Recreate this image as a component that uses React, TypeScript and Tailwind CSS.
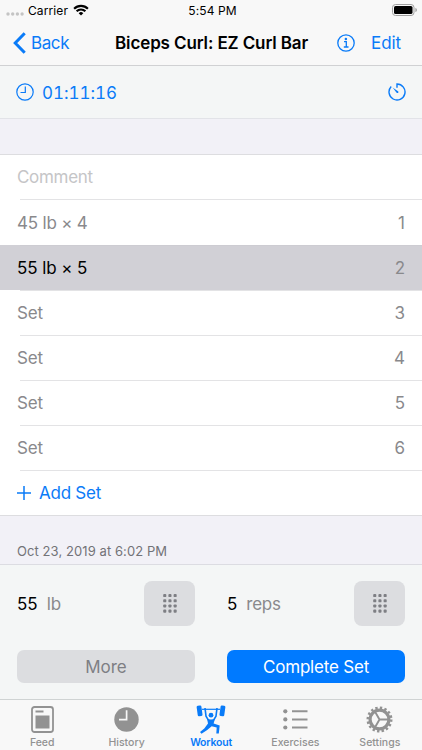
import type { ReactNode } from 'react'

const SETS = [
  { label: '45 lb × 4', active: false },
  { label: '55 lb × 5', active: true },
  { label: 'Set', active: false },
  { label: 'Set', active: false },
  { label: 'Set', active: false },
  { label: 'Set', active: false },
]

function StatusBar() {
  return (
    <div className="flex h-5 items-center text-[12px] leading-5 text-black">
      <div className="flex flex-1 items-center pl-[6px]">
        <svg width="18" height="4" viewBox="0 0 18 4" className="mt-[8px]" fill="#c4c4c4">
          <circle cx="2" cy="2" r="1.7" />
          <circle cx="6.7" cy="2" r="1.7" />
          <circle cx="11.4" cy="2" r="1.7" />
          <circle cx="16.1" cy="2" r="1.7" />
        </svg>
        <span className="ml-1 pt-px tracking-[0.1px]">Carrier</span>
        <svg width="16" height="12" viewBox="0 0 16 12" className="ml-[5px]" fill="none" stroke="#000" strokeWidth="2.1">
          <path d="M1.1 4.7a9.8 9.8 0 0 1 13.8 0" />
          <path d="M3.6 7.3a6.2 6.2 0 0 1 8.8 0" />
          <path d="M8 11.6 5.7 9.2a3.2 3.2 0 0 1 4.6 0z" fill="#000" stroke="none" />
        </svg>
      </div>
      <span className="pl-px pt-px tracking-[0.1px]">5:54 PM</span>
      <div className="flex flex-1 justify-end pr-[4px]">
        <svg width="26" height="12" viewBox="0 0 26 12">
          <rect x="0.5" y="0.5" width="21.5" height="11" rx="3" fill="none" stroke="#a0a0a0" />
          <rect x="2" y="2" width="18.5" height="8" rx="1.6" />
          <path d="M23.4 4v4c1-.4 1.5-1.1 1.5-2s-.5-1.6-1.5-2z" fill="#a0a0a0" />
        </svg>
      </div>
    </div>
  )
}

function NavBar() {
  return (
    <div className="flex h-[46px] items-center border-b border-[#d0d1d3] pl-[13px] pr-[21px] text-[17px] text-[#0a7bf8]">
      <svg width="13" height="22" viewBox="0 0 13 22" fill="none" stroke="currentColor" strokeWidth="3">
        <path d="M11.7 1.2 2.2 11l9.5 9.8" />
      </svg>
      <span className="ml-[5px] w-[84px] pt-[3px] tracking-[-0.4px]">Back</span>
      <span className="w-[222px] whitespace-nowrap pt-[3px] font-semibold tracking-[-0.12px] text-black">Biceps Curl: EZ Curl Bar</span>
      <svg width="18" height="18" viewBox="0 0 18 18" fill="none" stroke="currentColor" strokeWidth="1.3">
        <circle cx="9" cy="9" r="8.2" />
        <circle cx="8.9" cy="5" r="1.25" fill="currentColor" stroke="none" />
        <path d="M7 7.6h2.3v5.2M6.8 13h4.7" />
      </svg>
      <span className="ml-auto pt-[3px] tracking-[-0.1px]">Edit</span>
    </div>
  )
}

function TimerBar() {
  return (
    <div className="flex h-[53px] items-center border-b border-[#e2e3e8] bg-[#f4f6f6] pl-4 pr-4 text-[#0a7bf8]">
      <svg width="18" height="18" viewBox="0 0 18 18" fill="none" stroke="currentColor" strokeWidth="1.2">
        <circle cx="9" cy="9" r="8.2" />
        <path d="M9.3 3.5v6H4.5" />
      </svg>
      <span className="ml-2 pt-[3px] text-[17px] tabular-nums tracking-[-0.05px]">01:11:16</span>
      <svg width="18" height="18" viewBox="0 0 18 18" className="ml-auto" fill="none" stroke="currentColor" strokeWidth="1.4">
        <path d="M9 4.8V1a8 8 0 1 1-5.8 2.5" />
        <path d="M4.6 4.5 10 8.2c1.2 1-.3 2.6-1.4 1.5z" fill="currentColor" stroke="none" />
      </svg>
    </div>
  )
}

function KeypadButton() {
  return (
    <div className="flex h-[45px] w-[51px] items-center justify-center rounded-[8px] bg-[#dcdde0]">
      <svg width="14" height="19" viewBox="0 0 14 19" fill="#7e7f84">
        {[0, 1, 2, 3].map((row) =>
          [0, 1, 2].map((col) => (
            <rect key={`${row}-${col}`} x={col * 5.2 + 0.2} y={row * 5.2} width="3.1" height="3.1" rx="0.9" />
          ))
        )}
      </svg>
    </div>
  )
}

function Tab({ label, active, children }: { label: string; active?: boolean; children: ReactNode }) {
  return (
    <div className={`flex flex-1 flex-col items-center ${active ? 'text-[#0a7bf8]' : 'text-[#929292]'}`}>
      <div className="flex h-[36px] items-center justify-center pt-[3px]">{children}</div>
      <span className={`text-[10.5px] leading-[13px] ${active ? 'font-semibold tracking-[-0.2px]' : 'font-medium'}`}>
        {label}
      </span>
    </div>
  )
}

function TabBar() {
  return (
    <div className="flex h-[51px] border-t border-[#cfd3d3] bg-[#f8f8f8]">
      <Tab label="Feed">
        <svg width="23" height="27" viewBox="0 0 23 27" fill="none" stroke="currentColor">
          <rect x="1" y="1" width="21" height="25" rx="2.5" strokeWidth="1.8" />
          <path d="M4.5 5.5h8" strokeWidth="2" />
          <rect x="4.5" y="9.5" width="14" height="13" fill="currentColor" stroke="none" />
        </svg>
      </Tab>
      <Tab label="History">
        <svg width="25" height="25" viewBox="0 0 25 25">
          <circle cx="12.5" cy="12.5" r="12.2" fill="currentColor" />
          <path d="M12.6 3.2v9.5H5" fill="none" stroke="#f8f8f8" strokeWidth="1.7" />
        </svg>
      </Tab>
      <Tab label="Workout" active>
        <svg width="30" height="29" viewBox="0 0 30 29" fill="currentColor">
          <rect x="1.2" y="0.6" width="4.8" height="10.6" rx="1.3" transform="rotate(-8 3.7 6.1)" />
          <rect x="24" y="0.6" width="4.8" height="10.6" rx="1.3" transform="rotate(8 26.3 6.1)" />
          <path d="M6 4.3h18" stroke="currentColor" strokeWidth="1.2" />
          <circle cx="15" cy="10.2" r="2.4" />
          <path d="M9 3l1 8.2 2.4 4M21 3l-1 8.2-2.4 4" fill="none" stroke="currentColor" strokeWidth="1.6" />
          <path d="M11 13.4c2.600 1.400 5.400 1.400 8 0l-1.400 5.200 6.100 1.900-.9 8h-2.500l.4-6-5-1.200-4.500 3.600-5.700 3.800-1.500-1.700 4.300-3.500 3.700-5z" />
        </svg>
      </Tab>
      <Tab label="Exercises">
        <svg width="25" height="21" viewBox="0 0 25 21" fill="currentColor">
          <circle cx="2.3" cy="2.3" r="2.1" />
          <circle cx="2.3" cy="10.4" r="2.1" />
          <circle cx="2.3" cy="18.5" r="2.1" />
          <path d="M9 2.3h15.500M9 10.4h15.500M9 18.5h15.500" stroke="currentColor" strokeWidth="2" />
        </svg>
      </Tab>
      <Tab label="Settings">
        <svg width="27" height="27" viewBox="0 0 27 27" fill="none" stroke="currentColor">
          <circle cx="13.5" cy="13.5" r="9.4" strokeWidth="3.2" />
          <circle cx="13.5" cy="13.5" r="11.8" strokeWidth="2.4" strokeDasharray="2.4 2.234" />
          <path d="M13.5 13.5H22M13.5 13.5 9.2 6M13.5 13.5 9.2 21" strokeWidth="1.9" />
        </svg>
      </Tab>
    </div>
  )
}

export default function App() {
  return (
    <div className="flex h-[750px] w-[422px] flex-col overflow-hidden bg-[#f2f1f7] font-['Inter',sans-serif]">
      <div className="bg-[#f8f8f8]">
        <StatusBar />
        <NavBar />
      </div>
      <TimerBar />

      <div className="mt-[35px] border-y border-[#dddde0] bg-white text-[17px]">
        <div className="flex h-[44px] items-center pl-[17px] pt-px tracking-[-0.3px] text-[#c5c5c7]">Comment</div>
        {SETS.map((set, i) => (
          <div key={i} className={set.active ? 'bg-[#d1d0d6]' : ''}>
            <div className={`ml-5 h-px ${set.active ? 'bg-[#cdccd2]' : 'bg-[#e3e3e5]'}`} />
            <div className={`flex items-center justify-between px-[17px] text-[#89898c] ${i === 0 ? 'h-[45px] pt-0.5' : 'h-11 pt-px'}`}>
              <span className={set.active ? 'tracking-[-0.1px] text-black' : 'tracking-[-0.2px]'}>{set.label}</span>
              <span>{i + 1}</span>
            </div>
          </div>
        ))}
        <div className="ml-5 h-px bg-[#e3e3e5]" />
        <div className="flex h-[44px] items-center pl-[17px] text-[#0a7bf8]">
          <svg width="14" height="14" viewBox="0 0 14 14" stroke="currentColor" strokeWidth="1.5">
            <path d="M7 0v14M0 7h14" />
          </svg>
          <span className="ml-[8px] pt-[2px] tracking-[-0.25px]">Add Set</span>
        </div>
      </div>

      <div className="flex flex-1 items-end pb-[5px] pl-[17px] text-[13px] leading-4 tracking-[0.08px] text-[#737378]">Oct 23, 2019 at 6:02 PM</div>

      <div className="h-[135px] border-t border-[#dcdce2] bg-[#f4f6f6] px-[17px] pt-4 text-[17px]">
        <div className="flex gap-[32px]">
          <div className="flex flex-1 items-center justify-between">
            <div className="flex gap-[9px] pt-[2px] text-[#89898c]">
              <span className="text-black">55</span>
              <span>lb</span>
            </div>
            <KeypadButton />
          </div>
          <div className="flex flex-1 items-center justify-between">
            <div className="flex gap-[9px] pt-[2px] text-[#89898c]">
              <span className="text-black">5</span>
              <span className="tracking-[-0.3px]">reps</span>
            </div>
            <KeypadButton />
          </div>
        </div>
        <div className="mt-6 flex gap-[32px]">
          <div className="flex h-[33px] flex-1 items-center justify-center rounded-[7px] bg-[#dcdde0] pt-[2px] text-[#7e7f84]">More</div>
          <div className="flex h-[33px] flex-1 items-center justify-center rounded-[7px] bg-[#007aff] pt-[2px] tracking-[-0.2px] text-white">Complete Set</div>
        </div>
      </div>
      <TabBar />
    </div>
  )
}
